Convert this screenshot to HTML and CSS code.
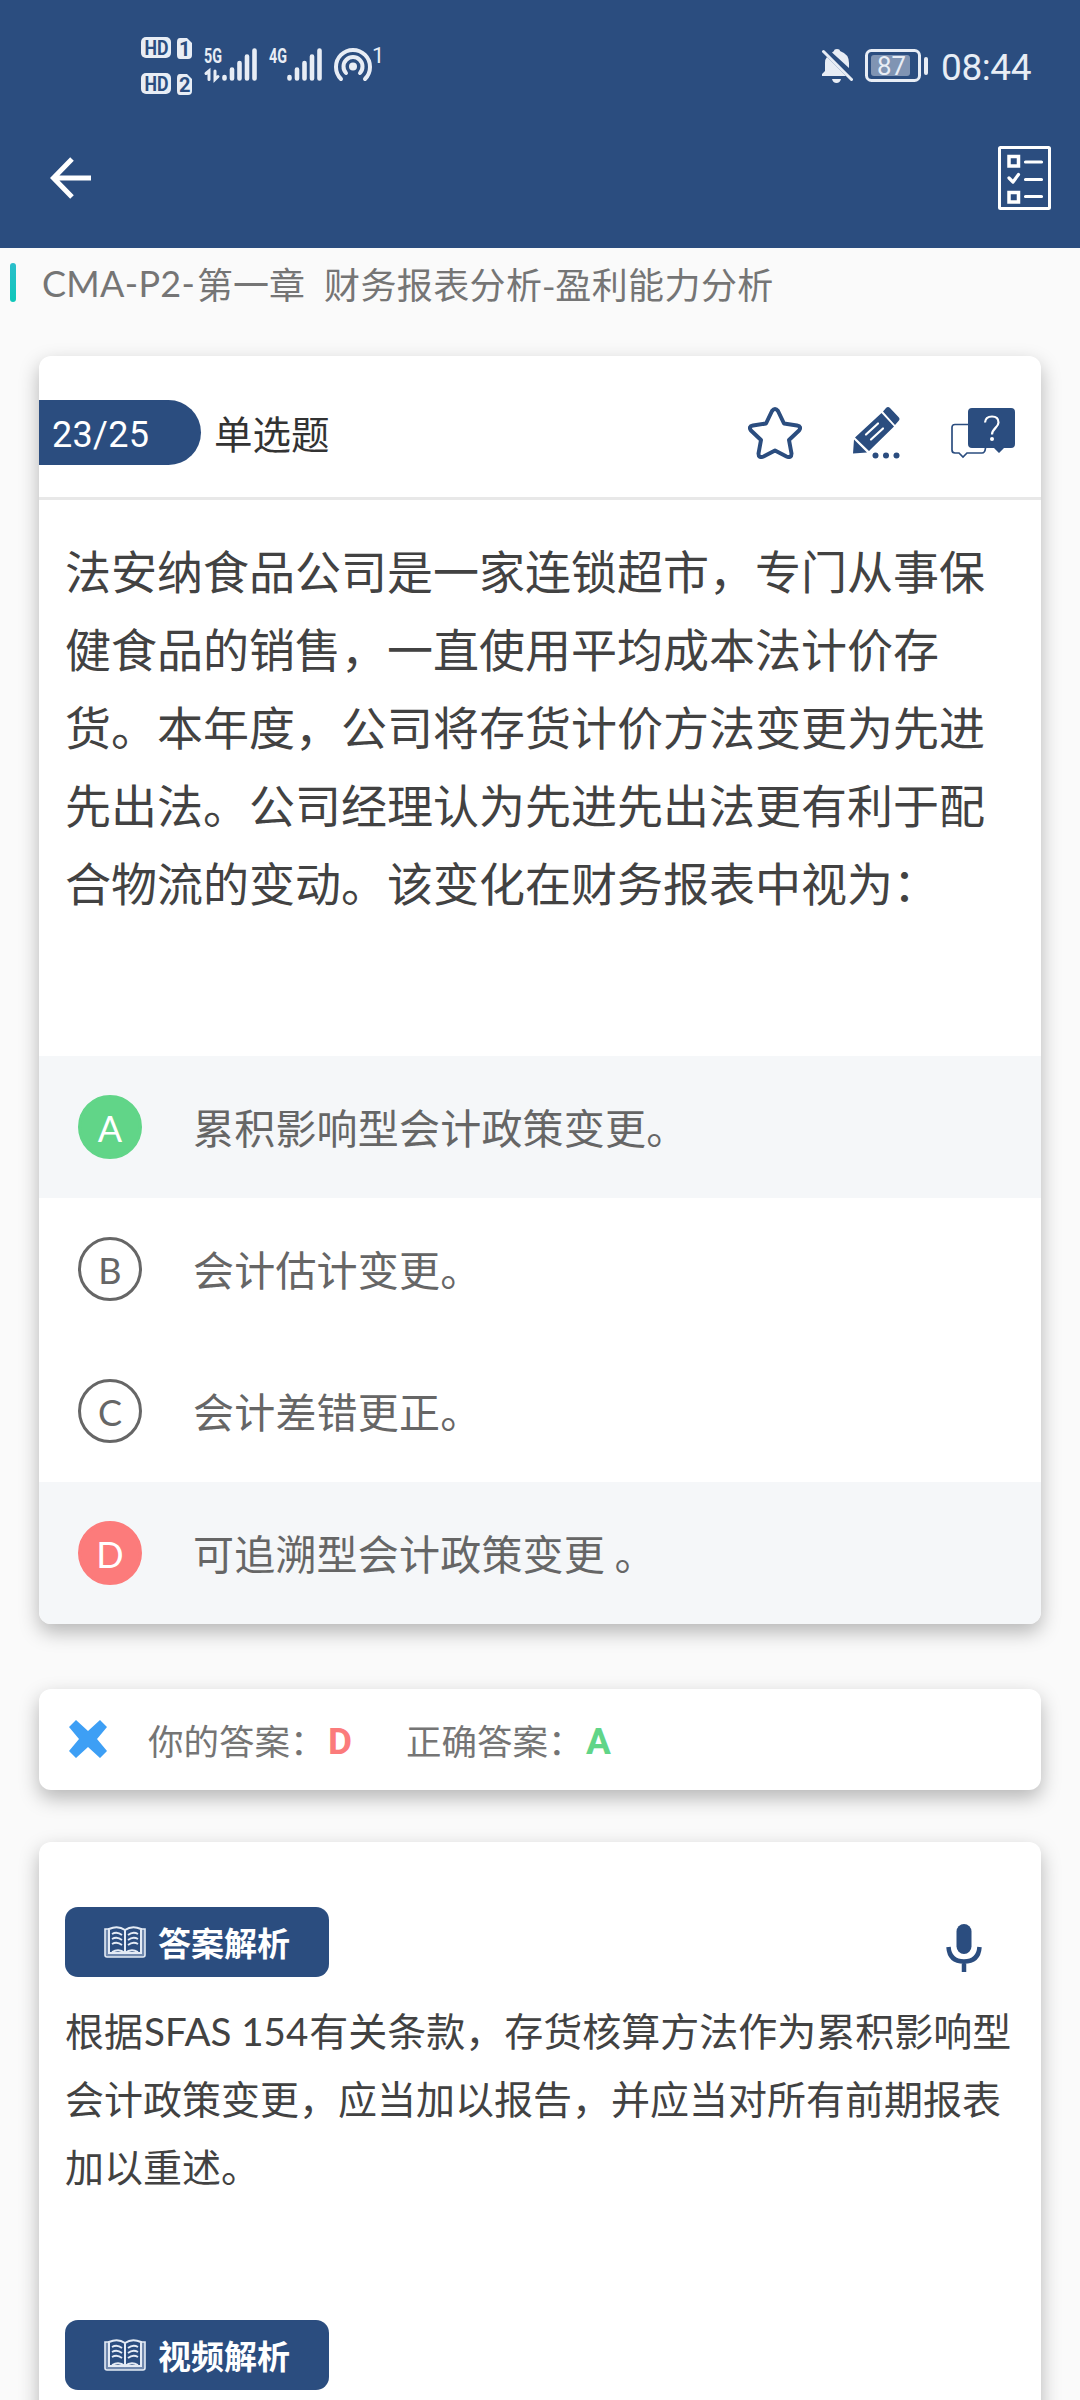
FILE: index.html
```html
<!DOCTYPE html>
<html lang="zh-CN">
<head>
    <meta charset="UTF-8">
    <meta name="viewport" content="width=device-width, initial-scale=1.0">
    <title>答案解析</title>
    <link rel="stylesheet" href="styles.css">
</head>
<body>

    <header>
        <!-- Status bar -->
        <div class="status-bar">
            <svg class="status-left" width="250" height="70" viewBox="135 30 250 70">
                <g fill="#e8edf5">
                    <rect x="141" y="37" width="30" height="21" rx="5"/>
                    <rect x="141" y="73" width="30" height="21" rx="5"/>
                    <path d="M180 38h7l5 5v12q0 4-4 4h-8q-3 0-3-4V42q0-4 3-4z"/>
                    <path d="M180 74h7l5 5v12q0 4-4 4h-8q-3 0-3-4V78q0-4 3-4z"/>
                </g>
                <g class="hd">
                    <text x="144.500" y="55" textLength="24" lengthAdjust="spacingAndGlyphs">HD</text>
                    <text x="144.500" y="91" textLength="24" lengthAdjust="spacingAndGlyphs">HD</text>
                    <text x="179" y="55.500">1</text>
                    <text x="179" y="91.500">2</text>
                </g>
                <g class="net">
                    <text x="204" y="62.500" textLength="18" lengthAdjust="spacingAndGlyphs">5G</text>
                    <text x="269" y="62.500" textLength="18" lengthAdjust="spacingAndGlyphs">4G</text>
                    <text class="hot" x="372" y="63">1</text>
                </g>
                <g fill="none" stroke="#e8edf5" stroke-width="4.6" stroke-linecap="round">
                    <path d="M224.500 77v1.500M232 69.500v9M239.500 63v15.500M247 56.500v22M254.500 50.500v28"/>
                    <path d="M289.500 77v1.500M297 69.500v9M304.500 63v15.500M312 56.500v22M319.500 50.500v28"/>
                    <path stroke-width="3" d="M209 79.500V71l-3 2.500M215 71v8.500l3-3"/>
                    <path stroke-width="4" d="M341 79a17 17 0 1 1 24 0M346 73a9.500 9.500 0 1 1 14 0"/>
                </g>
                <circle cx="353" cy="66.500" r="4" fill="#e8edf5"/>
            </svg>
            <div class="status-right">
                <svg width="32" height="36" viewBox="0 0 32 36">
                    <path fill="#e8edf5" d="M13 3q0-2 3-2t3 2q9 3 9 12v5L11 4.500zM6 9l19 19H1v-2l3-3V15q0-4 2-6zM11 31h9q-1 4-4.500 4T11 31z"/>
                    <path d="M2.500 3.500l28 28" stroke="#e8edf5" stroke-width="3" stroke-linecap="round"/>
                </svg>
                <svg width="64" height="34" viewBox="0 0 64 34">
                    <rect x="1.500" y="1.500" width="53" height="30" rx="5" fill="none" stroke="#e8edf5" stroke-width="3"/>
                    <rect x="6" y="6" width="39" height="21" rx="3" fill="#8094b3"/>
                    <rect x="59" y="8" width="4" height="18" rx="2" fill="#e8edf5"/>
                    <text class="battery" x="12" y="26" textLength="29" lengthAdjust="spacingAndGlyphs">87</text>
                </svg>
                <span class="clock">08:44</span>
            </div>
        </div>

        <!-- Navigation -->
        <div class="nav-bar">
            <svg width="42" height="42" viewBox="0 0 42 42" fill="none" stroke="#fff" stroke-width="5">
                <path d="M41 21H4M22 2L3.500 21 22 40"/>
            </svg>
            <svg width="53" height="64" viewBox="0 0 53 64" fill="none" stroke="#fff">
                <rect x="1.500" y="1.500" width="50" height="61" rx="1" stroke-width="3"/>
                <path stroke-width="3.500" d="M11 10.500h9.500V20H11zM11 46.500h9.500V56H11z"/>
                <path stroke-width="3.200" stroke-linecap="round" stroke-linejoin="round" d="M11 32l4 4 5.500-7.500M27.500 16h16M27.500 33.500h16M27.500 50.500h16"/>
            </svg>
        </div>
    </header>

    <div class="chapter">
        <span class="chapter-code">CMA-P2-</span><span>第一章</span><span class="chapter-name">财务报表分析-盈利能力分析</span>
    </div>

    <div class="card question">
        <div class="question-head">
            <span class="counter">23/25</span>
            <span class="kind">单选题</span>
            <div class="tools">
                <svg width="54" height="52" viewBox="0 0 54 52" fill="none" stroke="#2b4d7f" stroke-width="4" stroke-linejoin="round">
                    <path d="M24 4q3-4 6 0l6 12.500 13 2q5 1 2 5L41 33l2.500 13.500q0 5-5 3L27 43.500l-11.500 6q-5 2-5-3L13 33 3 23.500q-3-4 2-5l13-2z"/>
                </svg>
                <svg class="tool-edit" width="48" height="52" viewBox="0 0 48 52">
                    <path fill="#2b4d7f" d="M31 4.500L34 1q2-2 4 0l8.500 9q2 2 0 4l-3.500 4zM29.500 6L42 19.500 17 44 3 30.500zM2 32.500L15 45.500 1 46.500z"/>
                    <path d="M14 27.500l12-11M19 32.500l12-11" stroke="#fff" stroke-width="2.200" stroke-linecap="round"/>
                    <g fill="#2b4d7f"><circle cx="23.500" cy="48.500" r="3"/><circle cx="34" cy="48.500" r="3"/><circle cx="44.500" cy="48.500" r="3"/></g>
                </svg>
                <svg width="64" height="52" viewBox="0 0 64 52">
                    <path fill="none" stroke="#2b4d7f" stroke-width="1.700" d="M17 17.500H4q-3 0-3 3V43q0 3 3 3h4l4 4 4-4h15q3 0 3.500-5"/>
                    <path fill="#2b4d7f" d="M21 1h39q4 0 4 4v32q0 4-4 4h-7l-5 5-5-5H21q-4 0-4-4V5q0-4 4-4z"/>
                    <path d="M34 15.500q.5-6 7-6t6.500 6c0 5-6.500 6-6.500 12" fill="none" stroke="#fff" stroke-width="2.200"/>
                    <circle cx="41" cy="32" r="2" fill="#fff"/>
                </svg>
            </div>
        </div>

        <p class="question-text">法安纳食品公司是一家连锁超市，专门从事保健食品的销售，一直使用平均成本法计价存货。本年度，公司将存货计价方法变更为先进先出法。公司经理认为先进先出法更有利于配合物流的变动。该变化在财务报表中视为：</p>

        <div class="option selected">
            <span class="letter right">A</span>
            <span class="option-text">累积影响型会计政策变更。</span>
        </div>
        <div class="option">
            <span class="letter">B</span>
            <span class="option-text">会计估计变更。</span>
        </div>
        <div class="option">
            <span class="letter">C</span>
            <span class="option-text">会计差错更正。</span>
        </div>
        <div class="option selected">
            <span class="letter wrong">D</span>
            <span class="option-text">可追溯型会计政策变更 。</span>
        </div>
    </div>

    <div class="card result">
        <svg width="40" height="40" viewBox="0 0 40 40">
            <path fill="#3d9ff5" d="M8 1l12 11L32 1l7 7-10 12 10 12-7 7-12-11L8 39l-7-7 10-12L1 8z"/>
        </svg>
        <span class="result-label">你的答案：</span>
        <b class="your-answer">D</b>
        <span class="result-label">正确答案：</span>
        <b class="true-answer">A</b>
    </div>

    <div class="card analysis">
        <div class="analysis-head">
            <div class="tag">
                <svg width="42" height="32" viewBox="0 0 42 32" fill="none" stroke="#e4ebf5">
                    <path fill="#7189ae" stroke-width="1.600" d="M5 3H1v26q0 2 2 2h36q2 0 2-2V3h-4"/>
                    <path fill="#2b4d7f" stroke-width="2" d="M21 4Q14-1 5 3v24h32V3q-9-4-16 1v24"/>
                    <path stroke-width="1.800" d="M8 8q5-3 10 1M8 13q5-3 10 1M8 18q5-3 10 1M8 26q7-4 13 1 6-5 13-1M24 9q5-4 10-1M24 14q5-4 10-1M24 19q5-4 10-1"/>
                </svg>
                <span>答案解析</span>
            </div>
            <svg class="mic" width="36" height="50" viewBox="0 0 36 50">
                <rect x="10.500" y="1" width="15" height="30" rx="7.500" fill="#2b4d7f"/>
                <path d="M2.500 24q1 14.500 15.500 14.500T33.500 24M18 38v11" fill="none" stroke="#2b4d7f" stroke-width="4.500"/>
            </svg>
        </div>
        <p class="analysis-text">根据<span class="latin">SFAS 154</span>有关条款，存货核算方法作为累积影响型会计政策变更，应当加以报告，并应当对所有前期报表加以重述。</p>
        <div class="tag">
            <svg width="42" height="32" viewBox="0 0 42 32" fill="none" stroke="#e4ebf5">
                <path fill="#7189ae" stroke-width="1.600" d="M5 3H1v26q0 2 2 2h36q2 0 2-2V3h-4"/>
                <path fill="#2b4d7f" stroke-width="2" d="M21 4Q14-1 5 3v24h32V3q-9-4-16 1v24"/>
                <path stroke-width="1.800" d="M8 8q5-3 10 1M8 13q5-3 10 1M8 18q5-3 10 1M8 26q7-4 13 1 6-5 13-1M24 9q5-4 10-1M24 14q5-4 10-1M24 19q5-4 10-1"/>
            </svg>
            <span>视频解析</span>
        </div>
    </div>

</body>
</html>
```
FILE: styles.css
```css
* {
    box-sizing: border-box;
}

body {
    font-family: "Noto Sans CJK SC", sans-serif;
    background-color: #fafafa;
    color: #424242;
    margin: 0;
    height: 2400px;
    overflow: hidden;
}

svg {
    display: block;
    flex: none;
}

p {
    margin: 0;
}

header {
    background-color: #2b4d7f;
    height: 248px;
    padding-top: 30px;
}

.status-bar {
    display: flex;
    justify-content: space-between;
    height: 70px;
    padding: 0 48px 0 135px;
}

.hd {
    font: bold 20px Roboto, sans-serif;
    fill: #2b4d7f;
}

.net {
    font: bold 20px Roboto, sans-serif;
    fill: #e8edf5;
}

.hot {
    font-weight: normal;
    font-size: 22px;
}

.status-right {
    display: flex;
    align-items: center;
    height: 72px;
}

.status-right svg + svg {
    margin-left: 12px;
}

.battery {
    font: 26px Roboto, sans-serif;
    fill: #e8edf5;
}

.clock {
    font: 37px/40px Roboto, sans-serif;
    letter-spacing: -0.4px;
    color: #e8edf5;
    width: 91px;
    margin-left: 12px;
    padding-top: 3px;
    white-space: nowrap;
}

.nav-bar {
    display: flex;
    justify-content: space-between;
    align-items: center;
    height: 156px;
    padding: 0 29px 0 50px;
}

.chapter {
    display: flex;
    align-items: center;
    height: 74px;
    padding: 0 0 3px 10px;
    color: #757575;
    font-size: 36px;
    line-height: 71px;
}

/* teal marker in front of the chapter */
.chapter::before {
    content: "";
    width: 6px;
    height: 39px;
    margin: 0 26px 3px 0;
    border-radius: 3px;
    background: linear-gradient(#2bbecb, #0ec7b9);
}

.chapter-code {
    width: 155px;
    font-family: Lato, sans-serif;
    letter-spacing: 0.3px;
    white-space: nowrap;
}

.chapter-name {
    margin-left: 19px;
    letter-spacing: 0.4px;
}

.card {
    width: 1002px;
    margin: 0 auto;
    background-color: white;
    border-radius: 12px;
    box-shadow: 0 8px 20px rgba(0, 0, 0, 0.28);
}

.question {
    margin-top: 34px;
    overflow: hidden;
}

.question-head {
    display: flex;
    align-items: center;
    height: 144px;
    padding: 12px 26px 0 0;
    border-bottom: 3px solid #e8e8e8;
}

.counter {
    width: 162px;
    height: 65px;
    padding-left: 13px;
    border-radius: 0 33px 33px 0;
    background-color: #2b4d7f;
    color: white;
    font: 36px/71px Roboto, sans-serif;
    letter-spacing: 0.3px;
}

.kind {
    margin-left: 13px;
    color: #333;
    font-size: 38.5px;
    line-height: 65px;
}

.tools {
    display: flex;
    margin-left: auto;
}

.tool-edit {
    margin: 0 51px 0 50px;
}

.question-text {
    height: 556px;
    padding: 30px 40px 0 26px;
    font-size: 46px;
    line-height: 78px;
}

.option {
    display: flex;
    align-items: center;
    height: 142px;
    padding-left: 39px;
    color: #666;
    font-size: 41px;
}

.option-text {
    padding-bottom: 2px;
    letter-spacing: 0.2px;
}

.selected {
    background-color: #f5f7f9;
}

.letter {
    width: 64px;
    height: 64px;
    margin-right: 51px;
    border: 3px solid #666;
    border-radius: 50%;
    text-align: center;
    font: 36px/60px Lato, sans-serif;
}

.right {
    border-color: #61d588;
    background-color: #61d588;
    color: white;
}

.wrong {
    border-color: #fc7b7b;
    background-color: #fc7b7b;
    color: white;
}

.result {
    display: flex;
    align-items: center;
    height: 101px;
    margin-top: 65px;
    padding-left: 29px;
    font-size: 35.5px;
}

.result-label {
    width: 180px;
    color: #757575;
}

.result svg {
    margin-bottom: 2px;
}

.result svg + .result-label {
    margin-left: 40px;
}

.result b {
    padding-top: 4px;
    font: bold 37px/50px Roboto, sans-serif;
}

.your-answer {
    width: 78px;
    color: #fb7b7b;
}

.true-answer {
    color: #61d588;
}

.analysis {
    height: 620px;
    margin-top: 52px;
    padding: 65px 26px 0;
}

.analysis-head {
    display: flex;
    justify-content: space-between;
}

.tag {
    display: flex;
    align-items: center;
    width: 264px;
    height: 70px;
    padding-left: 39px;
    border-radius: 13px;
    background-color: #2b4d7f;
    color: white;
    font-size: 33px;
    font-weight: bold;
}

.tag span {
    margin-left: 12px;
    padding-bottom: 1px;
}

.mic {
    margin: 16px 33px 0 0;
}

.analysis-text {
    height: 343px;
    padding-top: 18px;
    font-size: 39px;
    line-height: 68px;
}

.latin {
    margin: 0 1px;
    font-family: Lato, sans-serif;
    font-size: 38.5px;
    line-height: 1;
}
```
